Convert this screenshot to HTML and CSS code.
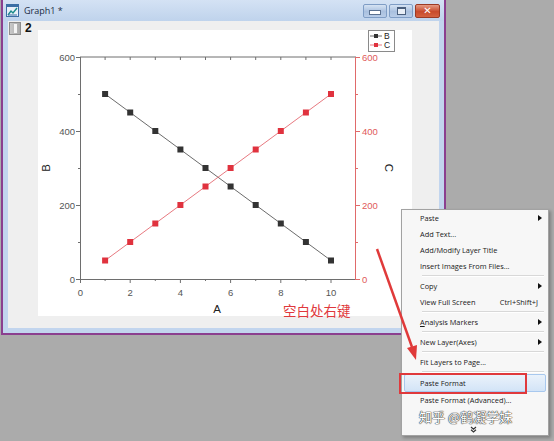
FILE: index.html
```html
<!DOCTYPE html>
<html>
<head>
<meta charset="utf-8">
<link rel="stylesheet" href="styles.css">
</head>
<body>
<div class="window">
  <div class="titlebar">
    <svg class="appicon" width="13" height="13" viewBox="0 0 13 13">
      <rect x="0.5" y="0.5" width="12" height="12" fill="#e8f0f8" stroke="#3b6ea5"/>
      <rect x="1" y="1" width="11" height="2" fill="#3b6ea5"/>
      <path d="M2 11 L5 7 L7 9 L11 4" fill="none" stroke="#1a8a8a" stroke-width="1.4"/>
      <path d="M2 11 H11" stroke="#3b6ea5" stroke-width="1"/>
    </svg>
    <span class="title">Graph1 *</span>
    <div class="wbtns">
      <div class="wbtn"><span class="minbar"></span></div>
      <div class="wbtn"><span class="maxbox"></span></div>
      <div class="wbtn close"><span class="x">✕</span></div>
    </div>
  </div>
  <div class="frame">
    <div class="client">
      <div class="layers">
        <span class="ltab"><span class="ltabmark"></span></span>
        <span class="lnum">2</span>
      </div>
      <div class="page">
        <svg class="plot" width="374" height="286" viewBox="38 30 374 286">
          <g stroke="#6e6e6e" stroke-width="1" fill="none">
            <line x1="80" y1="57" x2="356" y2="57"/>
            <line x1="80" y1="279.5" x2="356" y2="279.5"/>
            <line x1="80.5" y1="57" x2="80.5" y2="280"/>
            <path d="M105.1 57v3M130.2 57v3M155.3 57v3M180.4 57v3M205.5 57v3M230.6 57v3M255.7 57v3M280.8 57v3M305.9 57v3M331 57v3"/>
            <path d="M80.5 279v4M130.2 279v4M180.4 279v4M230.6 279v4M280.8 279v4M331 279v4"/>
            <path d="M105.1 279v2M155.3 279v2M205.5 279v2M255.7 279v2M305.9 279v2"/>
            <path d="M76 57.5h4M76 131.5h4M76 205.5h4M76 279.5h4"/>
            <path d="M78 94.5h2M78 168.5h2M78 242.5h2"/>
          </g>
          <g stroke="#e06a6a" stroke-width="1" fill="none">
            <line x1="355.5" y1="57" x2="355.5" y2="280"/>
            <path d="M356 57.5h4M356 131.5h4M356 205.5h4M356 279.5h4"/>
            <path d="M356 94.5h2M356 168.5h2M356 242.5h2"/>
          </g>
          <g class="tick" text-anchor="end">
            <text x="75" y="61">600</text>
            <text x="75" y="135">400</text>
            <text x="75" y="209">200</text>
            <text x="75" y="283">0</text>
          </g>
          <g class="tick red" text-anchor="start">
            <text x="362" y="61">600</text>
            <text x="362" y="135">400</text>
            <text x="362" y="209">200</text>
            <text x="362" y="283">0</text>
          </g>
          <g class="tick" text-anchor="middle">
            <text x="80.5" y="296">0</text>
            <text x="130.2" y="296">2</text>
            <text x="180.4" y="296">4</text>
            <text x="230.6" y="296">6</text>
            <text x="280.8" y="296">8</text>
            <text x="331" y="296">10</text>
          </g>
          <text class="atitle" x="217" y="313" text-anchor="middle">A</text>
          <text class="atitle" x="0" y="0" text-anchor="middle" transform="translate(50 168) rotate(-90)">B</text>
          <text class="atitle" x="0" y="0" text-anchor="middle" transform="translate(385 168) rotate(90)">C</text>
          <text class="note" x="283" y="316">空白处右键</text>
          <polyline fill="none" stroke="#5a5a5a" stroke-width="0.9" points="105.1,94 130.2,112.5 155.3,131 180.4,149.5 205.5,168 230.6,186.5 255.7,205 280.8,223.5 305.9,242 331,260.5"/>
          <polyline fill="none" stroke="#e46a72" stroke-width="0.9" points="105.1,260.5 130.2,242 155.3,223.5 180.4,205 205.5,186.5 230.6,168 255.7,149.5 280.8,131 305.9,112.5 331,94"/>
          <g fill="#333">
            <rect x="102.1" y="91" width="6" height="6"/>
            <rect x="127.2" y="109.5" width="6" height="6"/>
            <rect x="152.3" y="128" width="6" height="6"/>
            <rect x="177.4" y="146.5" width="6" height="6"/>
            <rect x="202.5" y="165" width="6" height="6"/>
            <rect x="227.6" y="183.5" width="6" height="6"/>
            <rect x="252.7" y="202" width="6" height="6"/>
            <rect x="277.8" y="220.5" width="6" height="6"/>
            <rect x="302.9" y="239" width="6" height="6"/>
            <rect x="328" y="257.5" width="6" height="6"/>
          </g>
          <g fill="#e0323e">
            <rect x="102.1" y="257.5" width="6" height="6"/>
            <rect x="127.2" y="239" width="6" height="6"/>
            <rect x="152.3" y="220.5" width="6" height="6"/>
            <rect x="177.4" y="202" width="6" height="6"/>
            <rect x="202.5" y="183.5" width="6" height="6"/>
            <rect x="227.6" y="165" width="6" height="6"/>
            <rect x="252.7" y="146.5" width="6" height="6"/>
            <rect x="277.8" y="128" width="6" height="6"/>
            <rect x="302.9" y="109.5" width="6" height="6"/>
            <rect x="328" y="91" width="6" height="6"/>
          </g>
          <rect x="368.5" y="30.5" width="26" height="21" fill="#fff" stroke="#8a8a8a" stroke-width="1"/>
          <line x1="370" y1="36" x2="382" y2="36" stroke="#5a5a5a" stroke-width="0.9"/>
          <rect x="374" y="34" width="4" height="4" fill="#333"/>
          <line x1="370" y1="45" x2="382" y2="45" stroke="#e46a72" stroke-width="0.9"/>
          <rect x="374" y="43" width="4" height="4" fill="#e0323e"/>
          <text class="leg" x="384" y="39">B</text>
          <text class="leg" x="384" y="48">C</text>
        </svg>
      </div>
    </div>
  </div>
</div>

<div class="menu">
  <div class="mi"><span>Paste</span><span class="sub"></span></div>
  <div class="mi"><span>Add Text...</span></div>
  <div class="mi"><span>Add/Modify Layer Title</span></div>
  <div class="mi"><span>Insert Images From Files...</span></div>
  <div class="sep"></div>
  <div class="mi"><span>Copy</span><span class="sub"></span></div>
  <div class="mi"><span>View Full Screen</span><span class="key">Ctrl+Shift+J</span></div>
  <div class="sep"></div>
  <div class="mi"><span><u>A</u>nalysis Markers</span><span class="sub"></span></div>
  <div class="sep"></div>
  <div class="mi"><span>New Layer(Axes)</span><span class="sub"></span></div>
  <div class="sep"></div>
  <div class="mi"><span>Fit Layers to Page...</span></div>
  <div class="sep"></div>
  <div class="mi hot"><span>Paste Format</span></div>
  <div class="mi"><span>Paste Format (Advanced)...</span></div>
  <div class="mi wm"><span>知乎 @鹤凝学妹</span></div>
  <div class="more"><svg width="7" height="7" viewBox="0 0 7 7"><path d="M1 1l2.5 2.2L6 1M1 3.8l2.5 2.2L6 3.8" fill="none" stroke="#333" stroke-width="1.2"/></svg></div>
</div>

<div class="redbox"></div>
<svg class="arrow" width="554" height="441" viewBox="0 0 554 441">
  <line x1="377" y1="249" x2="412" y2="347" stroke="#e03a3a" stroke-width="2.5"/>
  <polygon points="416,360 407,348 417,345" fill="#e03a3a"/>
</svg>
</body>
</html>
```

FILE: styles.css
```css
html, body {
  margin: 0;
  padding: 0;
}
body {
  width: 554px;
  height: 441px;
  overflow: hidden;
  background: #ababab;
  position: relative;
  font-family: "Open Sans", "Liberation Sans", sans-serif;
}
.window {
  margin-left: 1px;
  width: 445px;
  height: 335px;
  box-sizing: border-box;
  border: 2px solid #8b3f8f;
  border-top: none;
  background: #c2d5ee;
  display: flex;
  flex-direction: column;
}
.titlebar {
  height: 21px;
  display: flex;
  align-items: center;
  background: linear-gradient(#d4e2f4, #bfd3ec);
  padding-left: 3px;
}
.appicon {
  display: block;
  margin-right: 5px;
}
.title {
  font-size: 9px;
  color: #1b2c44;
}
.wbtns {
  margin-left: auto;
  margin-right: 4px;
  display: flex;
  gap: 2px;
  align-self: flex-start;
  margin-top: 4px;
}
.wbtn {
  width: 24px;
  height: 14px;
  box-sizing: border-box;
  border: 1px solid #7f9dc5;
  border-radius: 2px;
  background: linear-gradient(#d6e3f3, #a9c0df 55%, #b9cde8);
  display: flex;
  align-items: center;
  justify-content: center;
}
.wbtn.close {
  width: 25px;
  border-color: #9b3a25;
  background: linear-gradient(#e59a84, #c84a2c 55%, #d4623f);
}
.minbar {
  width: 10px;
  height: 3px;
  background: #fff;
  border: 1px solid #5b7190;
  margin-top: 3px;
}
.maxbox {
  width: 7px;
  height: 5px;
  border: 1px solid #4a5f7d;
  border-top-width: 2px;
  background: #e8eef6;
}
.x {
  color: #fff;
  font-size: 10px;
  font-weight: bold;
  line-height: 1;
  font-family: "DejaVu Sans", sans-serif;
}
.frame {
  flex: 1;
  padding: 0 5px 5px 5px;
  display: flex;
}
.client {
  flex: 1;
  background: #efefef;
  display: grid;
  grid-template-columns: 30px 374px;
  padding: 9px 0 12px 0;
}
.layers {
  margin-top: -8px;
  padding-left: 1px;
  display: flex;
  align-items: flex-start;
  gap: 4px;
}
.ltab {
  width: 12px;
  height: 13px;
  box-sizing: border-box;
  border: 1px solid #8c8c8c;
  background: linear-gradient(90deg, #c9c9c9, #a9a9a9);
  display: flex;
  justify-content: center;
  align-items: center;
}
.ltabmark {
  width: 3px;
  height: 9px;
  background: #f4f4f4;
}
.lnum {
  font-family: "Liberation Sans", Arial, sans-serif;
  font-weight: bold;
  font-size: 12px;
  line-height: 13px;
  color: #111;
}
.page {
  background: #fff;
  width: 374px;
  height: 286px;
}
.plot {
  display: block;
  overflow: visible;
}
.tick {
  font-family: "Liberation Sans", Arial, sans-serif;
  font-size: 9.5px;
  fill: #555;
}
.tick.red {
  fill: #e05a5a;
}
.atitle {
  font-family: "Liberation Sans", Arial, sans-serif;
  font-size: 11.5px;
  fill: #222;
}
.note {
  font-family: "Noto Sans CJK SC", sans-serif;
  font-size: 13.5px;
  fill: #e0383c;
}
.leg {
  font-family: "Liberation Sans", Arial, sans-serif;
  font-size: 8.5px;
  fill: #222;
}
.menu {
  position: absolute;
  left: 401px;
  top: 209px;
  width: 148px;
  height: 227px;
  box-sizing: border-box;
  background: #f7f7f7;
  border: 1px solid #a2a2a2;
  box-shadow: 2px 2px 3px rgba(0,0,0,0.25);
  padding-top: 0;
  font-family: "Open Sans", "Liberation Sans", sans-serif;
  font-size: 7.4px;
  color: #1a1a1a;
}
.mi {
  height: 16px;
  display: flex;
  align-items: center;
  padding-left: 16px;
  padding-right: 4px;
  box-sizing: border-box;
  margin: 0 2px;
}
.mi .key {
  margin-left: auto;
  margin-right: 4px;
}
.sub {
  margin-left: auto;
  width: 0;
  height: 0;
  border-top: 3.5px solid transparent;
  border-bottom: 3.5px solid transparent;
  border-left: 4px solid #111;
}
.sep {
  height: 4px;
  margin-left: 20px;
  margin-right: 4px;
  background: linear-gradient(transparent 1.5px, #d8d8d8 1.5px, #d8d8d8 2.5px, #fff 2.5px, #fff 3.5px, transparent 3.5px);
}
.mi.hot {
  height: 18px;
  padding-left: 15px;
  border: 1px solid #a8c8ee;
  border-radius: 2px;
  background: linear-gradient(#eaf2fb, #d3e4f7);
}
.mi.wm {
  font-family: "Noto Sans CJK SC", sans-serif;
  font-size: 13px;
  color: #fff;
  padding-left: 15px;
  text-shadow: 0 0 1px #333, 0 0 1px #333, 0 0 1px #333;
}
.more {
  display: flex;
  justify-content: center;
  height: 10px;
  padding-right: 4px;
  padding-top: 2px;
}
.redbox {
  position: absolute;
  left: 399px;
  top: 373px;
  width: 128px;
  height: 21px;
  box-sizing: border-box;
  border: 2px solid #e0393c;
}
.arrow {
  position: absolute;
  left: 0;
  top: 0;
  pointer-events: none;
}
```
